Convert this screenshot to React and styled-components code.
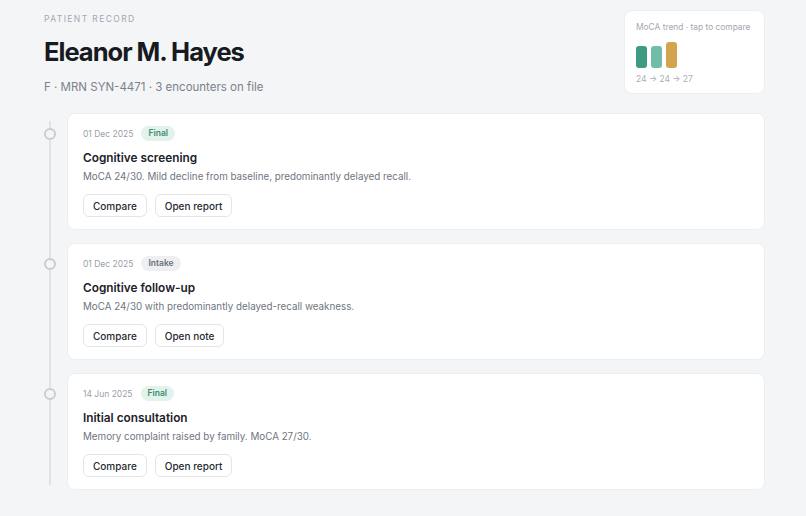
import React from "react";
import styled, { createGlobalStyle } from "styled-components";

const GlobalStyle = createGlobalStyle`
  html, body {
    margin: 0;
    padding: 0;
    background: #f4f5f7;
    font-family: Inter, "Noto Sans", sans-serif;
    -webkit-font-smoothing: antialiased;
  }
`;

const Page = styled.main`
  width: 806px;
  min-height: 516px;
  box-sizing: border-box;
  padding: 10px 41px 20px 44px;
`;

const Header = styled.header`
  display: flex;
  justify-content: space-between;
  align-items: flex-start;
  height: 103px;
`;

const TitleBlock = styled.div`
  display: flex;
  flex-direction: column;
  padding-top: 4px;
`;

const Eyebrow = styled.div`
  font-size: 8.5px;
  letter-spacing: 1.4px;
  color: #a3a8b1;
  text-transform: uppercase;
  line-height: 11px;
`;

const Name = styled.h1`
  margin: 11px 0 0;
  font-size: 25.5px;
  font-weight: 700;
  letter-spacing: -1px;
  color: #171a21;
  line-height: 32px;
`;

const Meta = styled.div`
  margin-top: 11px;
  font-size: 11.5px;
  color: #7b818b;
  line-height: 16px;
`;

const TrendCard = styled.button`
  all: unset;
  cursor: pointer;
  box-sizing: border-box;
  width: 141px;
  height: 84px;
  background: #fff;
  border: 1px solid #eceef1;
  border-radius: 8px;
  padding: 10px 11px;
  display: flex;
  flex-direction: column;
  font-family: inherit;
`;

const TrendLabel = styled.div`
  font-size: 8.4px;
  color: #a3a8b1;
  line-height: 12px;
  white-space: nowrap;
`;

const Bars = styled.div`
  display: flex;
  align-items: flex-end;
  gap: 4px;
  height: 26px;
  margin-top: 9px;
`;

const Bar = styled.span`
  width: 11px;
  border-radius: 3px;
  background: ${(p) => p.color};
`;

const Scores = styled.div`
  margin-top: 5px;
  font-size: 8.5px;
  color: #a9aeb6;
  line-height: 12px;
  white-space: nowrap;
`;

const Timeline = styled.section`
  position: relative;
  display: flex;
  flex-direction: column;
  gap: 13px;
  padding-left: 23px;

  &::before {
    content: "";
    position: absolute;
    left: 5px;
    top: 8px;
    bottom: 5px;
    width: 2px;
    background: #dfe2e6;
  }
`;

const Card = styled.article`
  position: relative;
  background: #fff;
  border: 1px solid #eceef1;
  border-radius: 8px;
  padding: 12px 15px 12px;
  display: flex;
  flex-direction: column;
`;

const Dot = styled.span`
  position: absolute;
  left: -24px;
  top: 14px;
  width: 8px;
  height: 8px;
  border-radius: 50%;
  border: 2px solid #c9cdd3;
  background: #f4f5f7;
`;

const MetaRow = styled.div`
  display: flex;
  align-items: center;
  gap: 8px;
  height: 15px;
`;

const Date = styled.span`
  font-size: 8.5px;
  color: #9aa0a9;
`;

const Badge = styled.span`
  font-size: 8.5px;
  font-weight: 600;
  padding: 0 7px;
  height: 15px;
  line-height: 15px;
  border-radius: 8px;
  color: ${(p) => (p.tone === "final" ? "#3f8a70" : "#6b7079")};
  background: ${(p) => (p.tone === "final" ? "#e2f3ec" : "#eeeff2")};
`;

const CardTitle = styled.h2`
  margin: 8px 0 0;
  font-size: 11.8px;
  font-weight: 600;
  color: #1d2129;
  line-height: 18px;
`;

const Desc = styled.p`
  margin: 3px 0 0;
  font-size: 9.8px;
  color: #6f757f;
  line-height: 14px;
`;

const Actions = styled.div`
  display: flex;
  gap: 8px;
  margin-top: 10px;
`;

const Button = styled.button`
  font-family: inherit;
  font-size: 10px;
  font-weight: 500;
  color: #262a31;
  background: #fff;
  border: 1px solid #e3e5e9;
  border-radius: 6px;
  height: 23px;
  padding: 0 9px;
  cursor: pointer;
`;

const encounters = [
  {
    date: "01 Dec 2025",
    status: "Final",
    tone: "final",
    title: "Cognitive screening",
    desc: "MoCA 24/30. Mild decline from baseline, predominantly delayed recall.",
    open: "Open report",
  },
  {
    date: "01 Dec 2025",
    status: "Intake",
    tone: "intake",
    title: "Cognitive follow-up",
    desc: "MoCA 24/30 with predominantly delayed-recall weakness.",
    open: "Open note",
  },
  {
    date: "14 Jun 2025",
    status: "Final",
    tone: "final",
    title: "Initial consultation",
    desc: "Memory complaint raised by family. MoCA 27/30.",
    open: "Open report",
  },
];

const trend = [
  { h: 22, color: "#3f9a82" },
  { h: 22, color: "#72bcaa" },
  { h: 26, color: "#d4a44c" },
];

export default function App() {
  return (
    <>
      <GlobalStyle />
      <Page>
        <Header>
          <TitleBlock>
            <Eyebrow>Patient record</Eyebrow>
            <Name>Eleanor M. Hayes</Name>
            <Meta>F · MRN SYN-4471 · 3 encounters on file</Meta>
          </TitleBlock>
          <TrendCard>
            <TrendLabel>MoCA trend · tap to compare</TrendLabel>
            <Bars>
              {trend.map((b, i) => (
                <Bar key={i} color={b.color} style={{ height: b.h }} />
              ))}
            </Bars>
            <Scores>24 → 24 → 27</Scores>
          </TrendCard>
        </Header>
        <Timeline>
          {encounters.map((e, i) => (
            <Card key={i}>
              <Dot />
              <MetaRow>
                <Date>{e.date}</Date>
                <Badge tone={e.tone}>{e.status}</Badge>
              </MetaRow>
              <CardTitle>{e.title}</CardTitle>
              <Desc>{e.desc}</Desc>
              <Actions>
                <Button>Compare</Button>
                <Button>{e.open}</Button>
              </Actions>
            </Card>
          ))}
        </Timeline>
      </Page>
    </>
  );
}
